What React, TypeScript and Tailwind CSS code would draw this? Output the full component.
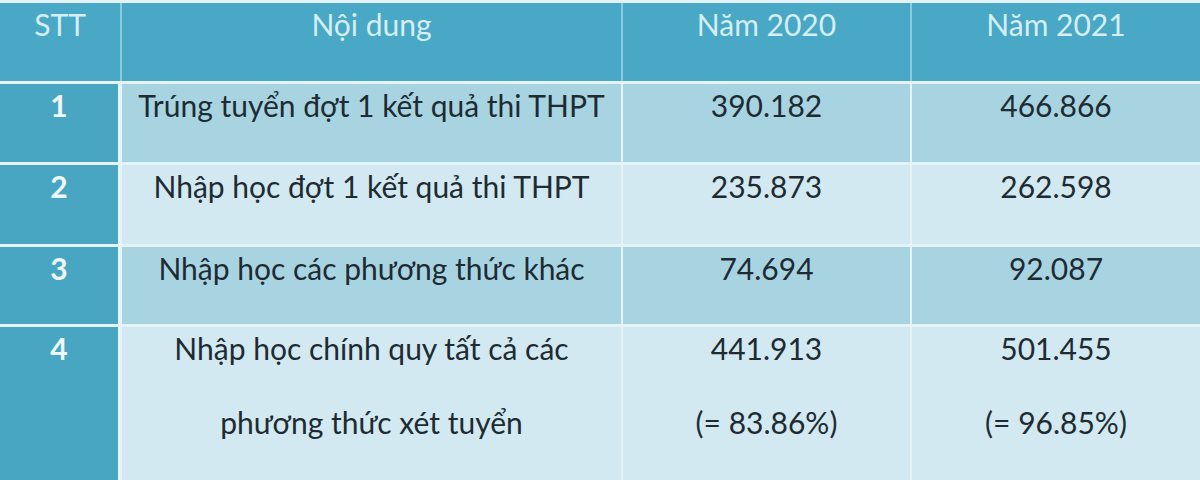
import React from "react";

type Row = {
  stt: string;
  content: string[];
  y2020: string[];
  y2021: string[];
  tone: "dark" | "light";
  h: string;
};

const rows: Row[] = [
  {
    stt: "1",
    content: ["Trúng tuyển đợt 1 kết quả thi THPT"],
    y2020: ["390.182"],
    y2021: ["466.866"],
    tone: "dark",
    h: "h-[78px]",
  },
  {
    stt: "2",
    content: ["Nhập học đợt 1 kết quả thi THPT"],
    y2020: ["235.873"],
    y2021: ["262.598"],
    tone: "light",
    h: "h-[79px]",
  },
  {
    stt: "3",
    content: ["Nhập học các phương thức khác"],
    y2020: ["74.694"],
    y2021: ["92.087"],
    tone: "dark",
    h: "h-[77px]",
  },
  {
    stt: "4",
    content: ["Nhập học chính quy tất cả các", "phương thức xét tuyển"],
    y2020: ["441.913", "(= 83.86%)"],
    y2021: ["501.455", "(= 96.85%)"],
    tone: "light",
    h: "h-[160px]",
  },
];

function Lines({ lines }: { lines: string[] }) {
  return (
    <div className="pt-[3px] text-center">
      {lines.map((l, i) => (
        <div key={i} className={`leading-[36px] ${i > 0 ? "mt-[38px]" : ""}`}>
          {l}
        </div>
      ))}
    </div>
  );
}

export default function App() {
  const cols = "grid grid-cols-[120px_499px_287px_1fr] gap-x-[2px]";
  return (
    <div
      className="w-[1200px] h-[480px] overflow-hidden bg-[#e4f3f8] pt-[3px] flex flex-col gap-y-[3px] text-[30px]"
      style={{ fontFamily: "Lato, 'Open Sans', sans-serif" }}
    >
      {/* Header */}
      <div className={`${cols} bg-[#8ccbdd] h-[78px] shrink-0`}>
        {["STT", "Nội dung", "Năm 2020", "Năm 2021"].map((t) => (
          <div key={t} className="bg-[#48a8c5] text-[#d6eef5] text-center pt-[3px] leading-[36px]">
            {t}
          </div>
        ))}
      </div>

      {rows.map((r) => {
        const bg = r.tone === "dark" ? "bg-[#a8d4e2]" : "bg-[#d2e9f1]";
        return (
          <div key={r.stt} className={`${cols} ${r.h} shrink-0`}>
            <div className="bg-[#48a6c2] border-r-2 border-[#e8f6fa] text-[#eef8fb] font-bold text-center pt-[3px] leading-[36px]">
              {r.stt}
            </div>
            <div className={`${bg} text-[#1e2b33]`}>
              <Lines lines={r.content} />
            </div>
            <div className={`${bg} text-[#1e2b33]`}>
              <Lines lines={r.y2020} />
            </div>
            <div className={`${bg} text-[#1e2b33]`}>
              <Lines lines={r.y2021} />
            </div>
          </div>
        );
      })}
    </div>
  );
}
